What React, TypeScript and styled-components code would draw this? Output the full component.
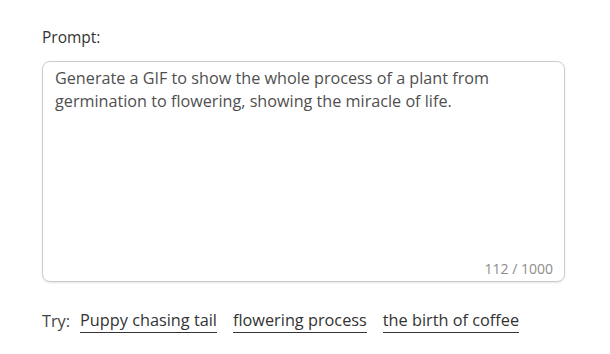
import React, { useState, ChangeEvent } from 'react'
import styled, { createGlobalStyle } from 'styled-components'

const GlobalStyle = createGlobalStyle`
  html, body {
    margin: 0;
    padding: 0;
    background: #ffffff;
  }
  body {
    font-family: 'Open Sans', 'Noto Sans', 'Liberation Sans', sans-serif;
    color: #333333;
  }
`

const suggestions = ['Puppy chasing tail', 'flowering process', 'the birth of coffee']

const App = (): JSX.Element => {
  const [text, setText] = useState<string>(
    'Generate a GIF to show the whole process of a plant from germination to flowering, showing the miracle of life.'
  )

  return (
    <Page>
      <GlobalStyle />
      <Label htmlFor="prompt">Prompt:</Label>
      <Field>
        <TextArea
          id="prompt"
          value={text}
          maxLength={1000}
          onChange={(e: ChangeEvent<HTMLTextAreaElement>) => setText(e.target.value)}
        />
        <Counter>112 / 1000</Counter>
      </Field>
      <TryRow>
        <TryLabel>Try:</TryLabel>
        {suggestions.map((s) => (
          <Suggestion key={s} onClick={() => setText(s)}>
            {s}
          </Suggestion>
        ))}
      </TryRow>
    </Page>
  )
}

const Page = styled.div`
  width: 610px;
  height: 354px;
  box-sizing: border-box;
  padding: 26px 45px 0 42px;
  display: flex;
  flex-direction: column;
`

const Label = styled.label`
  font-size: 15.5px;
  line-height: 22px;
  color: #333333;
  margin-bottom: 13px;
`

const Field = styled.div`
  position: relative;
  width: 523px;
  height: 221px;
  box-sizing: border-box;
  border: 1px solid #cccccc;
  border-radius: 8px;
  box-shadow: 0 1px 2px rgba(0, 0, 0, 0.1);
`

const TextArea = styled.textarea`
  width: 100%;
  height: 100%;
  box-sizing: border-box;
  border: none;
  outline: none;
  resize: none;
  background: transparent;
  padding: 5px 12px;
  font-family: inherit;
  font-size: 16.2px;
  line-height: 23px;
  color: #4f4f4f;
`

const Counter = styled.span`
  position: absolute;
  right: 11px;
  bottom: 3px;
  font-size: 14px;
  line-height: 19px;
  color: #8c8c8c;
`

const TryRow = styled.div`
  display: flex;
  align-items: center;
  gap: 16px;
  margin-top: 27px;
  font-size: 16.3px;
  line-height: 23px;
`

const TryLabel = styled.span`
  color: #444444;
  margin-right: -6px;
`

const Suggestion = styled.span`
  color: #333333;
  border-bottom: 1px solid #333333;
  cursor: pointer;
`

export default App
